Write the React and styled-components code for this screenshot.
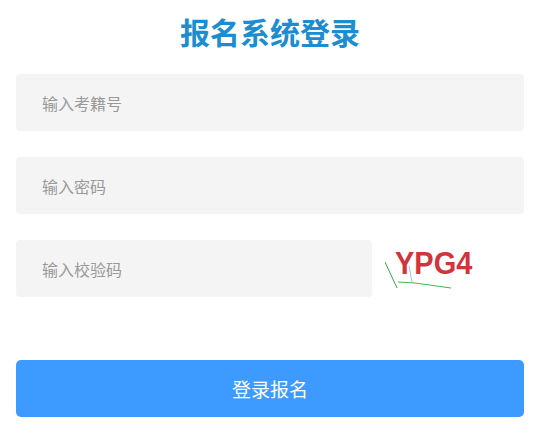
import styled, { createGlobalStyle } from "styled-components";

const GlobalStyle = createGlobalStyle`
    body {
        margin: 0;
        background: #fff;
        font-family: "Noto Sans CJK SC", "Liberation Sans", sans-serif;
    }
`;

function Captcha() {
    return (
        <CaptchaBox>
            <svg width="96" height="42" viewBox="0 0 96 42">
                <text x="10" y="25" fill="#d0343c" fontSize="29" fontWeight="bold" fontFamily="Liberation Sans, sans-serif" transform="scale(1 1.05)">YPG4</text>
                <path d="M0 14 L12 40" stroke="#3aa04a" strokeWidth="1" fill="none" />
                <path d="M13 34 L30 35 L66 40" stroke="#3cb84e" strokeWidth="1" fill="none" />
                <path d="M24 18 L27 34" stroke="#8fb0c0" strokeWidth="0.8" fill="none" />
            </svg>
        </CaptchaBox>
    );
}

function App() {
    return (
        <Page>
            <GlobalStyle />
            <Title>报名系统登录</Title>
            <Form>
                <Field placeholder="输入考籍号" />
                <Field placeholder="输入密码" type="password" />
                <CodeRow>
                    <Field placeholder="输入校验码" />
                    <Captcha />
                </CodeRow>
                <SubmitButton>登录报名</SubmitButton>
            </Form>
        </Page>
    );
}

const Page = styled.div`
    width: 534px;
    padding: 11px 10px 0 16px;
    box-sizing: border-box;
`;

const Title = styled.h1`
    margin: 0;
    height: 40px;
    line-height: 40px;
    text-align: center;
    font-size: 30px;
    font-weight: bold;
    color: #1c8dd0;
`;

const Form = styled.div`
    display: flex;
    flex-direction: column;
    gap: 26px;
    margin-top: 23px;
`;

const Field = styled.input`
    height: 57px;
    box-sizing: border-box;
    width: 100%;
    border: none;
    border-radius: 4px;
    background: #f4f4f4;
    padding: 0 26px;
    font-size: 16px;
    font-family: "Noto Sans CJK SC", "Liberation Sans", sans-serif;
    outline: none;

    &::placeholder {
        color: #999;
    }
`;

const CodeRow = styled.div`
    display: flex;
    align-items: center;
    gap: 13px;

    & > input {
        width: 356px;
        flex: none;
    }
`;

const CaptchaBox = styled.div`
    width: 96px;
    height: 42px;
    background: #fff;
`;

const SubmitButton = styled.button`
    margin-top: 37px;
    height: 57px;
    border: none;
    border-radius: 5px;
    background: #3d9afe;
    color: #fff;
    font-size: 19px;
    font-family: "Noto Sans CJK SC", "Liberation Sans", sans-serif;
    cursor: pointer;
`;

export default App;
